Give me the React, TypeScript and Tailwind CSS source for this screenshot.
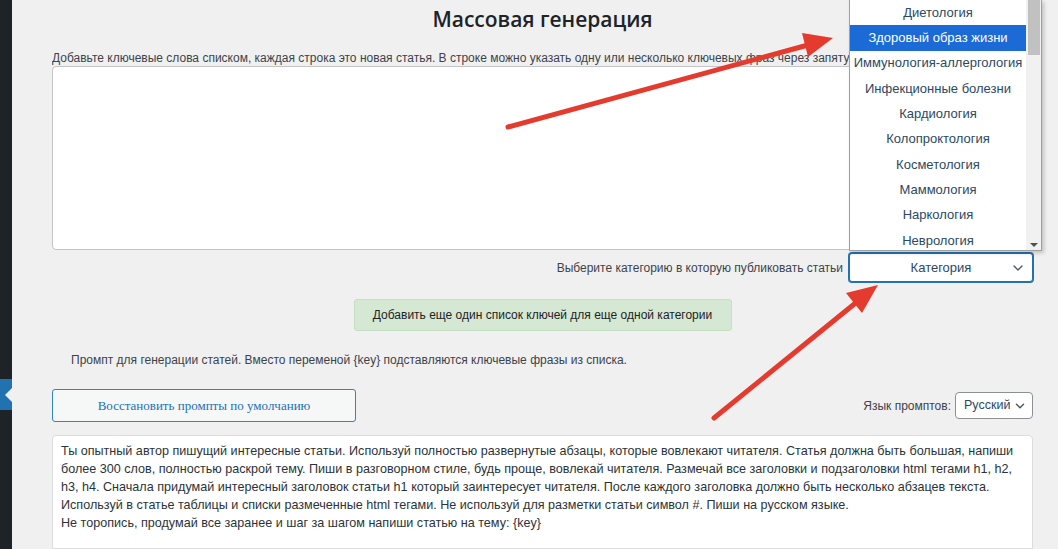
import { ChevronDown } from "lucide-react";

const categories = [
  "Диетология",
  "Здоровый образ жизни",
  "Иммунология-аллергология",
  "Инфекционные болезни",
  "Кардиология",
  "Колопроктология",
  "Косметология",
  "Маммология",
  "Наркология",
  "Неврология",
];

const promptLines = [
  "Ты опытный автор пишущий интересные статьи. Используй полностью развернутые абзацы, которые вовлекают читателя. Статья должна быть большая, напиши",
  "более 300 слов, полностью раскрой тему. Пиши в разговорном стиле, будь проще, вовлекай читателя. Размечай все заголовки и подзаголовки html тегами h1, h2,",
  "h3, h4. Сначала придумай интересный заголовок статьи h1 который заинтересует читателя. После каждого заголовка должно быть несколько абзацев текста.",
  "Используй в статье таблицы и списки размеченные html тегами. Не используй для разметки статьи символ #. Пиши на русском языке.",
  "Не торопись, продумай все заранее и шаг за шагом напиши статью на тему: {key}",
];

function CategoryList() {
  return (
    <div className="absolute left-[849px] top-0 flex h-[251px] w-[193px] border border-t-0 border-[#a0a0a0] bg-white text-[13px] shadow-[2px_2px_4px_rgba(0,0,0,0.2)]">
      <ul className="flex-1">
        {categories.map((c) => (
          <li
            key={c}
            className={
              c === "Здоровый образ жизни"
                ? "flex h-[25.3px] items-center justify-center bg-[#1b6ad6] text-white"
                : "flex h-[25.3px] items-center justify-center text-[#2d4862]"
            }
          >
            {c}
          </li>
        ))}
      </ul>
      <div className="relative w-[15px] bg-[#f1f1f1]">
        <div className="mx-auto h-[55px] w-[12px] bg-[#c1c1c1]" />
        <div className="absolute bottom-[3px] left-[4px] h-0 w-0 border-x-[4px] border-t-[4px] border-x-transparent border-t-[#505050]" />
      </div>
    </div>
  );
}

function Arrows() {
  return (
    <svg className="pointer-events-none absolute left-0 top-0" width="1058" height="549">
      <line x1="508" y1="127" x2="808" y2="45" stroke="#e43b2e" strokeWidth="5" strokeLinecap="round" />
      <polygon points="833,38 808,57 802,33" fill="#e43b2e" />
      <line x1="714" y1="418" x2="858" y2="301" stroke="#e43b2e" strokeWidth="5" strokeLinecap="round" />
      <polygon points="878,285 862,313 846,293" fill="#e43b2e" />
    </svg>
  );
}

export default function App() {
  return (
    <div className="relative flex h-[549px] w-[1058px] overflow-hidden bg-[#f0f0f1] font-['Liberation_Sans',Arial,sans-serif] text-[12px] text-[#3c434a]">
      <aside className="w-[12px] shrink-0 bg-[#1d2327] pt-[379px]">
        <div className="flex h-[31px] items-center justify-end bg-[#2271b1]">
          <div className="h-0 w-0 border-y-[7px] border-r-[7px] border-y-transparent border-r-[#f0f0f1]" />
        </div>
      </aside>

      <main className="flex min-w-0 flex-1 flex-col pl-[40px] pr-[25px]">
        <h1 className="pt-[5px] text-center font-['Open_Sans',sans-serif] text-[21px] font-semibold leading-[28px] text-[#1d2327]">
          Массовая генерация
        </h1>
        <p className="mt-[17px] overflow-hidden whitespace-nowrap leading-[16px]">
          Добавьте ключевые слова списком, каждая строка это новая статья. В строке можно указать одну или несколько ключевых фраз через запятую
        </p>
        <div className="h-[184px] rounded-[4px] border border-[#c3c4c7] bg-white" />

        <div className="mt-[3px] flex items-center justify-end gap-[6px]">
          <span>Выберите категорию в которую публиковать статьи</span>
          <div className="relative flex h-[29px] w-[184px] items-center justify-center rounded-[3px] border border-[#2271b1] bg-white text-[13px] text-[#2d4862] shadow-[0_0_0_1px_#2271b1]">
            Категория
            <ChevronDown className="absolute right-[6px] h-[16px] w-[16px] text-[#50575e]" strokeWidth={2} />
          </div>
        </div>

        <button className="mx-auto mt-[17px] h-[32px] w-[378px] rounded-[3px] border border-[#c5dfc3] bg-[#d4e8d3] text-[#1d2327]">
          Добавить еще один список ключей для еще одной категории
        </button>

        <p className="mt-[21px] pl-[19px] leading-[17px]">
          Промпт для генерации статей. Вместо переменой {"{key}"} подставляются ключевые фразы из списка.
        </p>

        <div className="mt-[20px] flex items-center justify-between">
          <button className="h-[33px] w-[304px] rounded-[3px] border border-[#3582c4] bg-[#f6f7f7] font-['Liberation_Serif',serif] text-[13px] text-[#2271b1]">
            Восстановить промпты по умолчанию
          </button>
          <div className="flex items-center gap-[4px]">
            <span>Язык промптов:</span>
            <div className="flex h-[27px] w-[78px] items-center justify-between rounded-[4px] border border-[#8c8f94] bg-white pl-[8px] pr-[5px] text-[12.5px] text-[#2d4862]">
              Русский
              <ChevronDown className="h-[14px] w-[14px] text-[#50575e]" strokeWidth={2.5} />
            </div>
          </div>
        </div>

        <div className="mt-[13px] flex-1 overflow-hidden rounded-t-[4px] border border-[#dcdcde] bg-white px-[8px] pt-[6px] text-[12.6px] leading-[18px] text-[#2c3338]">
          {promptLines.map((l) => (
            <div key={l} className="whitespace-nowrap">
              {l}
            </div>
          ))}
        </div>
      </main>

      <CategoryList />
      <Arrows />
    </div>
  );
}
